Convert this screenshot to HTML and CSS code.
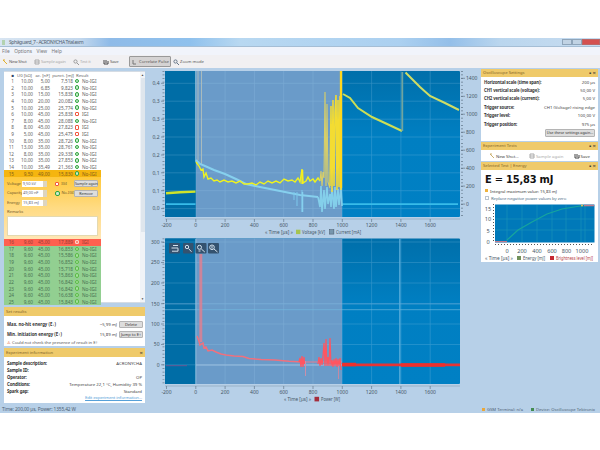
FILE: index.html
```html
<!DOCTYPE html>
<html lang="en">
<head>
    <meta charset="UTF-8">
    <title>Spark energy measurement</title>
    <link rel="stylesheet" href="styles.css">
</head>
<body>
    <div class="window">
        <div class="titlebar">
            <span class="app-icon"></span>
            <span class="title">Sphäguard_7 - ACRONYCHA Trial.exm</span>
            <span class="win-buttons"><i></i><i></i><i class="close"></i></span>
        </div>
        <div class="menu"><span>File</span><span>Options</span><span>View</span><span>Help</span></div>
        <div class="toolbar">
            <span class="tool t1"><svg class="icon" viewBox="0 0 6 6"><path d="M1 1l4 4M1 1h2" stroke="#e0b030"/></svg>New Shot</span>
            <span class="tool t2 off"><svg class="icon" viewBox="0 0 6 6"><path d="M1 1h4v4H1zM1 3h4" stroke="#aaa"/></svg>Sample again</span>
            <span class="tool t3 off"><svg class="icon" viewBox="0 0 6 6"><circle cx="2.5" cy="2.5" r="1.6" stroke="#999"/><path d="M4 4l2 2" stroke="#999"/></svg>Test it</span>
            <span class="tool t4"><svg class="icon" viewBox="0 0 6 6"><path d="M1 1v4h4V2M3 1v3" stroke="#444"/></svg>Save</span>
            <span class="tool t5 pressed"><svg class="icon" viewBox="0 0 6 6"><path d="M1 1v4h3" stroke="#777"/></svg>Correlate Pulse</span>
            <span class="tool t6"><svg class="icon" viewBox="0 0 6 6"><circle cx="2.5" cy="2.5" r="1.6" stroke="#678"/><path d="M4 4l2 2" stroke="#678"/></svg>Zoom mode</span>
        </div>

        <div class="main">
            <div class="left">
                <div class="list">
                    <div class="rows">
                        <div class="row head"><span>■</span><span>U0 [kΩ]</span><span>ac. [nF]</span><span>punct. [mJ]</span><span>Result</span></div>
                        <div id="rows-top"></div>
                        <div class="form">
                            <div class="field"><label>Voltage</label><span class="spin">9,50 kV</span><i class="mark red"></i><span class="word">IGI</span><button>Sample again</button></div>
                            <div class="field"><label>Capacity</label><span class="spin">49,00 nF</span><i class="mark"></i><span class="word">No-IGI</span><button>Remove</button></div>
                            <div class="field"><label>Energy</label><span class="spin">15,83 mJ</span></div>
                            <div class="remarks">Remarks</div>
                            <div class="textarea"></div>
                        </div>
                        <div id="rows-bottom"></div>
                    </div>
                    <div class="scroll"><span>▲</span><i></i><span>▼</span></div>
                </div>

                <div class="panel results">
                    <div class="panel-head">Set results</div>
                    <div class="panel-body">
                        <div class="line"><b>Max. no-hit energy (E↓)</b><span>~5,99 mJ</span><button>Delete</button></div>
                        <div class="line"><b>Min. initiation energy (E↑)</b><span>15,89 mJ</span><button>Jump to E↑</button></div>
                        <div class="warn"><i>⚠</i> Could not check the presence of result in E↑</div>
                    </div>
                </div>

                <div class="panel info">
                    <div class="panel-head">Experiment information <em>×</em></div>
                    <div class="panel-body">
                        <div class="line"><b>Sample description:</b><span>ACRONYCHA</span></div>
                        <div class="line"><b>Sample ID:</b><span></span></div>
                        <div class="line"><b>Operator:</b><span>OP</span></div>
                        <div class="line"><b>Conditions:</b><span>Temperature 22,1 °C, Humidity 39 %</span></div>
                        <div class="line"><b>Spark gap:</b><span>Standard</span></div>
                        <a class="link">Edit experiment information...</a>
                    </div>
                </div>
            </div>

            <div class="charts">
                <svg class="chart" id="chart-vi" width="334" height="168" viewBox="146 68 334 168">
                    <defs>
                        <linearGradient id="sea" x1="0" y1="0" x2="0" y2="1">
                            <stop offset="0" stop-color="#006faa"/><stop offset=".45" stop-color="#007fc2"/><stop offset="1" stop-color="#0080c4"/>
                        </linearGradient>
                    </defs>
                    <rect x="165" y="71" width="295" height="146" rx="1" fill="url(#sea)"/>
                    <rect x="165" y="71" width="31" height="146" fill="#006da6"/>
                    <rect x="196" y="71" width="146" height="146" fill="#6a9bc9"/>
                    <g class="grid"></g>
                    <path d="M195.7 71V162" stroke="#aacce0" stroke-width=".8"/>
                    <path d="M198 71V160M201.5 71V165" stroke="#a9bbbd" stroke-width="1"/>
                    <path d="M166 204.2H195.5M342 204.2H458" stroke="#38bce9" stroke-width="1.8" fill="none"/>
                    <path d="M196 160L200 164L205 166L214 170L225 174L236 179L246 184L260 187L280 191L300 195L318 197" stroke="#86d0ee" stroke-width="2" fill="none"/>
                    <path d="M294 192v8M297 192v14M302 190v22" stroke="#7cc8ec" stroke-width="1"/>
                    <path d="M302.500 192V212" stroke="#86d0ee" stroke-width="1.500"/>
                    <path d="M318 197L320 207L321 186L322 212L324 190L325 209L327 187L328 204L330 194L331 207L332 188L334 209L335 187L336 207L338 189L339 205L341 188L342 206" stroke="#84cfea" stroke-width="1.6" fill="none"/>
                    <path d="M166 193.2L180 192.3L195.5 191.6" stroke="#cfe32a" stroke-width="2.4" fill="none"/>
                    <path d="M196 162L199 166L201 170L203 169L204 177L206 173L208 179L211 178L214 181L217 180L220 182L224 180L228 182L232 181L236 183L240 181L244 184L248 184L252 183L256 185L260 182L264 184L268 181L272 183L276 181L280 183L284 179L288 181L292 180L295 182L298 178L300 182L302 169L303 183L306 181L308 177L310 181L313 179L315 182L318 178L320 181" stroke="#eef21f" stroke-width="1.4" fill="none"/>
                    <path d="M302.300 170V184" stroke="#f6ee20" stroke-width="2"/>
                    <path d="M320 181L321 171L322 186L323 172L324 178L325 92L326 186L327 104L328 182L330 188" stroke="#d7ce69" stroke-width="1.1" fill="none"/>
                    <path d="M330 186L331 106L332 192L333 100L334 186L335 112L336 95L337 190L338 100L339 187L340 96L341 190" stroke="#f3dc32" stroke-width="1.5" fill="none"/>
                    <path d="M341 71V188" stroke="#ffd71d" stroke-width="2.3"/>
                    <path d="M343 94L350 98L358 108L372 117L386 123.5L402 131" stroke="#cdde55" stroke-width="2" fill="none"/>
                    <path d="M402.3 131V72" stroke="#70a5a0" stroke-width="1.8"/>
                    <path d="M405.5 72.5L412 79L420 87L430 96L445 103L459 110" stroke="#cfdd65" stroke-width="2" fill="none"/>
                    <g class="axes"></g>
                    <g class="legend"><text x="265" y="234.2" textLength="28" lengthAdjust="spacingAndGlyphs">« Time [µs] »</text><rect x="296" y="229.7" width="4.4" height="4.4" fill="#a6c44f"/><text x="302" y="234.2" textLength="23" lengthAdjust="spacingAndGlyphs">Voltage [kV]</text><rect x="329.5" y="229.7" width="4.4" height="4.4" fill="#7796ad" stroke="#456" stroke-width=".5"/><text x="336" y="234.2" textLength="25" lengthAdjust="spacingAndGlyphs">Current [mA]</text></g>
                </svg>
                <svg class="chart" id="chart-power" width="334" height="170" viewBox="146 236 334 170">
                    <rect x="165" y="238.5" width="295" height="145.5" rx="1" fill="url(#sea)"/>
                    <rect x="165" y="238.5" width="31" height="145.5" fill="#006da6"/>
                    <rect x="196" y="238.5" width="146" height="145.5" fill="#6a9bc9"/>
                    <g class="grid"></g>
                    <path d="M165 309.7H460" stroke="#74bbdf" stroke-width=".8" opacity=".8"/>
                    <path d="M165 303.9H460" stroke="#78b2dc" stroke-width=".8" opacity=".6"/>
                    <path d="M196 365H342" stroke="#a5c5e3" stroke-width=".8"/>
                    <path d="M399.8 239V384" stroke="#5dafdc" stroke-width="1.2"/>
                    <path d="M195.8 239V384" stroke="#9cc6e3" stroke-width=".8"/>
                    <path d="M200.8 254V342" stroke="#df8192" stroke-width="3" opacity=".85"/>
                    <path d="M197 336L199 341L200 345L203 343L204 348L206 347L208 351L212 350L216 352L221 354L226 355L234 356L243 356.500L249 358.500L261 359.500L275 360L289 361.300L302 362" stroke="#f0707d" stroke-width="1.5" fill="none"/>
                    <path d="M301 362H342" stroke="#e47c90" stroke-width="1"/>
                    <path d="M299 362L300 358L301 367L302 356L303 367L304 357L304.500 364" stroke="#ff5561" stroke-width="1.3" fill="none"/>
                    <path d="M305.5 361v15" stroke="#c98faa"/>
                    <path d="M318 364L319 357L320 366L321 358L322 365L323 356L324 343L325 366L326 339L327 366L328 357L329 366L330 338L331 366L332 360L333 367L334 359L335 366L336 358L337 367L338 359L339 366L340 358L341 370" stroke="#ff5560" stroke-width="1.2" fill="none"/>
                    <path d="M338.500 366V379" stroke="#d9849b" stroke-width=".8"/>
                    <path d="M166 365.7H187" stroke="#81508e" stroke-width=".8"/>
                    <path d="M342 364.9H460" stroke="#e53435" stroke-width="2.6"/>
                    <path d="M342 364.5H356M401 365H445" stroke="#ef2f2c" stroke-width="3.6"/>
                    <g class="axes"></g>
                    <g class="zoom-tools" fill="none" stroke="#d5e2ee" stroke-width="1">
                        <g fill="#34526f" stroke="none"><rect x="169" y="243" width="11" height="10.5" rx="1"/><rect x="183" y="243" width="10.5" height="10.5" rx="1"/><rect x="195.5" y="243" width="11" height="10.5" rx="1"/><rect x="208" y="243" width="11" height="10.5" rx="1"/></g>
                        <path d="M173 245.5h5M171.500 248h6.500M172 251.200h6v-3"/>
                        <circle cx="187" cy="247" r="1.7"/><path d="M188.5 248.5l3 3.3"/>
                        <circle cx="199.5" cy="247.3" r="2"/><path d="M201.3 249l3.5 3M198.5 251h2"/>
                        <circle cx="212" cy="247.3" r="2.3"/><path d="M214 249l3.5 3M212 246v2.6"/>
                    </g>
                    <g class="legend"><text x="284" y="401" textLength="27" lengthAdjust="spacingAndGlyphs">« Time [µs] »</text><rect x="314.5" y="396.8" width="4.6" height="4.6" fill="#a42d3c"/><text x="321" y="401" textLength="19" lengthAdjust="spacingAndGlyphs">Power [W]</text></g>
                </svg>
            </div>

            <div class="right">
                <div class="panel settings">
                    <div class="panel-head">Oscilloscope Settings <em>▪ ×</em></div>
                    <div class="panel-body">
                        <div class="line"><b>Horizontal scale (time span):</b><span>200 µs</span></div>
                        <div class="line"><b>CH1 vertical scale (voltage):</b><span>50,00 V</span></div>
                        <div class="line"><b>CH2 vertical scale (current):</b><span>5,00 V</span></div>
                        <div class="line"><b>Trigger source:</b><span>CH1 (Voltage) rising edge</span></div>
                        <div class="line"><b>Trigger level:</b><span>100,00 V</span></div>
                        <div class="line"><b>Trigger position:</b><span>975 µs</span></div>
                        <button>Use these settings again...</button>
                    </div>
                </div>
                <div class="panel tests">
                    <div class="panel-head">Experiment Tests <em>▪ ×</em></div>
                    <div class="panel-body">
                        <span><svg class="icon" viewBox="0 0 6 6"><path d="M1 1l4 4M1 1h2" stroke="#cbb070"/></svg>New Shot...</span>
                        <span class="off"><svg class="icon" viewBox="0 0 6 6"><path d="M1 1h4v4H1zM1 3h4" stroke="#aaa"/></svg>Sample again</span>
                        <span><svg class="icon" viewBox="0 0 6 6"><path d="M1 1v4h4V2M3 1v3" stroke="#444"/></svg>Save</span>
                    </div>
                </div>
                <div class="panel energy">
                    <div class="panel-head">Selected Test | Energy <em>▪ ×</em></div>
                    <div class="panel-body">
                        <div class="value">E <span>=</span> 15,83 mJ</div>
                        <div class="note"><i class="bullet"></i>Integral maximum value: 15,83 mJ</div>
                        <div class="note blue"><i class="box"></i>Replace negative power values by zero</div>
                        <svg class="mini" width="116" height="60" viewBox="481 202 116 60">
                            <rect x="495" y="204.5" width="99.5" height="38" fill="#0079b9"/>
                            <path d="M507 205v37M522 205v37M537 205v37M552 205v37M566 205v37M581 205v37M585 205v37M495 219h99M495 230h99" stroke="#1994b9" stroke-width=".7"/>
                            <path d="M507 240L518 230L532 222L547 214L562 209L580 206L594 205.5" stroke="#16a59d" stroke-width="1.2" fill="none"/>
                            <path d="M495 241.7H507M584 205.5H594" stroke="#c0798c" stroke-width="1.3"/>
                            <circle cx="582" cy="205.5" r="1" fill="#f0c050"/>
                            <path d="M493.5 204v39M495 244.5h99" stroke="#555" stroke-width="1" stroke-dasharray="1 2"/>
                            <g class="mini-labels"><text x="488" y="210.5">15</text><text x="488" y="221">10</text><text x="488" y="232.5">5</text><text x="488" y="243.5">0</text>
                            <text x="507" y="252.5">0</text><text x="522" y="252.5">200</text><text x="537" y="252.5">400</text><text x="552" y="252.5">600</text><text x="566.5" y="252.5">800</text><text x="582" y="252.5">1000</text></g>
                            <g class="legend"><text x="485" y="260" textLength="28" lengthAdjust="spacingAndGlyphs">« Time [µs] »</text><rect x="517" y="256" width="4" height="4" fill="#71915a"/><text x="523" y="260" textLength="22" lengthAdjust="spacingAndGlyphs">Energy [mJ]</text><rect x="550" y="256" width="4" height="4" fill="#c62a32"/><text class="red-text" x="556" y="260" textLength="37" lengthAdjust="spacingAndGlyphs">Brightness level [mJ]</text></g>
                        </svg>
                    </div>
                </div>
            </div>
        </div>
        <div class="status"><span>Time: 200,00 µs, Power: 1355,42 W</span><span class="devices"><i class="amber"></i>GSM Terminal: n/a<i class="green"></i>Device: Oscilloscope Tektronix</span></div>
    </div>

    <script>
        // number, set voltage, capacity, energy, ignition
        const shots = [
            [1, '10,00', '5,00', '7,518', 0], [2, '10,00', '6,85', '9,823', 0],
            [3, '10,00', '15,00', '15,838', 0], [4, '10,00', '20,00', '20,082', 0],
            [5, '10,00', '25,00', '25,774', 0], [6, '10,00', '45,00', '25,838', 1],
            [7, '8,00', '45,00', '28,088', 0], [8, '8,00', '45,00', '27,823', 1],
            [9, '5,00', '45,00', '25,475', 1], [10, '8,00', '35,00', '28,726', 0],
            [11, '13,00', '35,00', '28,761', 0], [12, '8,00', '35,00', '29,338', 0],
            [13, '10,00', '35,00', '27,853', 0], [14, '10,00', '35,49', '21,363', 0],
            [15, '9,50', '49,00', '15,830', 0], [16, '9,60', '45,00', '17,889', 1],
            [17, '9,60', '45,00', '16,853', 0], [18, '9,60', '45,00', '15,586', 0],
            [19, '9,60', '45,00', '16,852', 0], [20, '9,60', '45,00', '15,718', 0],
            [21, '9,60', '45,00', '15,863', 0], [22, '9,60', '45,00', '16,842', 0],
            [23, '9,60', '45,00', '16,842', 0], [24, '9,60', '45,00', '16,638', 0],
            [25, '9,60', '45,00', '15,843', 0]
        ];
        shots.forEach(function (s) {
            const row = document.createElement('div');
            row.className = 'row' + (s[0] === 15 ? ' selected' : s[0] === 16 ? ' fail' : s[0] > 16 ? ' pass' : '');
            row.innerHTML = '<span>' + s.slice(0, 4).join('</span><span>') + '</span><i class="mark' + (s[4] ? ' red' : '') + '"></i><span>' + (s[4] ? 'IGI' : 'No-IGI') + '</span>';
            document.getElementById(s[0] < 16 ? 'rows-top' : 'rows-bottom').appendChild(row);
        });

        function label(x, y, text, anchor) {
            return '<text x="' + x + '" y="' + (y + 1.8) + '" text-anchor="' + anchor + '">' + text + '</text>';
        }

        function drawAxes(id, top, bottom, left, right) {
            const chart = document.getElementById(id);
            let grid = '', axes = '';
            for (let i = 0; i < 10; i++) {
                const x = 166.5 + i * 29.3;
                if (i > 0) grid += '<path d="M' + x + ' ' + top + 'V' + bottom + '"/>';
                axes += '<path d="M' + x + ' ' + (bottom + 2) + 'v3"/>' + label(x, bottom + 8, -200 + i * 200, 'middle');
            }
            left.forEach(function (t) {
                grid += '<path d="M165 ' + t[0] + 'H460"/>';
                axes += '<path d="M161 ' + t[0] + 'h3"/>' + label(159.5, t[0], t[1], 'end');
            });
            right.forEach(function (t) {
                axes += '<path d="M461 ' + t[0] + 'h4"/>' + label(466, t[0], t[1], 'start');
            });
            axes += '<path class="ticks" d="M163.5 ' + top + 'V' + bottom + '"/>';
            if (right.length) axes += '<path class="ticks" d="M462 ' + top + 'V' + bottom + '"/>';
            axes += '<path d="M165 ' + (bottom + 2) + 'H460" opacity=".5"/>';
            chart.querySelector('.grid').innerHTML = grid;
            chart.querySelector('.axes').innerHTML = axes;
        }

        drawAxes('chart-vi', 71, 217,
            [[83.3, '0,4'], [101.2, '0,3'], [119.2, '0,3'], [137, '0,2'], [155, '0,2'], [172.8, '0,1'], [190.7, '0,1'], [208.6, '0,0']],
            [[78.3, 1400], [96.3, 1200], [114.2, 1000], [132.2, 800], [150.2, 600], [168.2, 400], [186.1, 200], [204.1, 0]]);
        drawAxes('chart-power', 238.5, 384,
            [[242, 300], [262.5, 250], [283, 200], [303.7, 150], [324, 100], [344.5, 50], [364.8, 0]], []);
    </script>
</body>
</html>
```

FILE: styles.css
```css
* {
    box-sizing: border-box;
}

body {
    margin: 0;
    padding-top: 38px;
    height: 450px;
    background: #fff;
    overflow: hidden;
    font-family: "Noto Sans", Verdana, sans-serif;
    font-size: 4.3px;
    line-height: 6px;
    color: #444;
}

i, em {
    font-style: normal;
}

.window {
    width: 600px;
    height: 375px;
    background: #b7d0e8;
    display: flex;
    flex-direction: column;
}

.titlebar {
    height: 9px;
    display: flex;
    align-items: center;
    padding-left: 2px;
    background: linear-gradient(90deg, #d8e5f2 0, #c3d8ed 80px, #8fbbe8 110px, #8fc1ed 190px, #b8d8f1 240px, #abd0f0 400px, #94bfe9 450px, #bad6ee 500px, #c7dcf0 600px);
    border-bottom: 1px solid #a5bed5;
}

.app-icon {
    width: 3px;
    height: 5px;
    background: #b3d2b0;
    margin-right: 4px;
}

.title {
    font-size: 5px;
    letter-spacing: -.4px;
    color: #52616f;
}

.win-buttons {
    margin-left: auto;
    align-self: flex-start;
    display: flex;
    padding-top: 1px;
}

.win-buttons i {
    width: 10px;
    height: 6px;
    border: 1px solid #8fa5ba;
    background: #c1d3e4;
}

.win-buttons .close {
    width: 18px;
    background: #d45150;
    border-color: #b66;
}

.menu {
    height: 8px;
    display: flex;
    gap: 4.5px;
    padding: 1px 2px;
    background: #f1f4fb;
    font-size: 4.8px;
    color: #777;
}

.toolbar {
    height: 13px;
    display: flex;
    align-items: center;
    padding-left: 2px;
    background: #f1f0f2;
    color: #555;
    font-size: 4.2px;
    letter-spacing: -.15px;
}

.tool {
    display: flex;
    align-items: center;
    gap: 1px;
    white-space: nowrap;
}

.t1 { width: 32px; }
.t2 { width: 39px; }
.t3 { width: 30px; }
.t4 { width: 26px; }
.t5 { width: 42px; margin-right: 2px; }

.off {
    color: #aaa;
}

.pressed {
    height: 11px;
    padding-left: 2px;
    border: 1px solid #999;
    border-radius: 1px;
    background: #d5d3d3;
    letter-spacing: 0;
}

.t6 {
    letter-spacing: 0;
}

.icon {
    width: 6px;
    height: 6px;
    fill: none;
    stroke-width: 1;
    flex: none;
}

.main {
    display: flex;
    height: 338px;
}

.left {
    width: 146px;
    padding: 3px 1px 0 4px;
}

.list {
    display: flex;
    height: 232px;
    background: #fff;
    border: 0 solid #d5dce4;
    border-width: 1px 0;
}

.rows {
    width: 97px;
    font-size: 4.7px;
    color: #5f5f5f;
}

.row {
    display: grid;
    grid-template-columns: 10px 19px 17px 23px 8px 20px;
    align-items: center;
    height: 6.61px;
    text-align: right;
    white-space: nowrap;
}

.row > span:last-child {
    text-align: left;
    padding-left: 1px;
}

.head {
    grid-template-columns: 10px 18px 18px 24px 24px;
    height: 5.8px;
    font-size: 4.3px;
}

.head span:first-child {
    color: #346;
}

.head > span:last-child {
    padding-left: 2px;
}

.mark {
    width: 4.5px;
    height: 4.5px;
    border: 1px solid #2ea63e;
    border-radius: 2px;
    background: #cdebcf;
    justify-self: center;
    flex: none;
}

.mark.red {
    border-color: #f0553e;
    border-radius: 1px;
    background: #fff;
}

.selected {
    background: #f5b50f;
    color: #866018;
}

.fail {
    background: #ff604f;
    color: #953b34;
}

.fail .mark.red {
    border-color: #ffd3c9;
    background: #ff8b79;
}

.pass {
    background: #92cf91;
    color: #487151;
}

.pass .mark {
    border-color: #59bc43;
    background: #a7dfa0;
}

.form {
    height: 62px;
    padding: 2px 3px;
    background: linear-gradient(#ffc93c, #ffdb83 50%, #ffe6b5);
    font-size: 4.1px;
    letter-spacing: -.1px;
    color: #765b2d;
}

.field {
    height: 9.7px;
    display: flex;
    align-items: center;
}

.field label {
    width: 15px;
}

.spin {
    width: 25px;
    height: 6.5px;
    padding-left: 1px;
    border-right: 4px solid #ddd5c0;
    background: #fff;
    color: #667;
    white-space: nowrap;
    flex: none;
}

.field .mark {
    margin-left: 8px;
}

.word {
    width: 15px;
    padding-left: 2px;
    white-space: nowrap;
}

button {
    height: 7px;
    padding: 0;
    border: 1px solid #b4b4b4;
    border-radius: 1px;
    background: #ddd;
    font: 4px/5px "Noto Sans", sans-serif;
    color: #333;
    white-space: nowrap;
}

.field button {
    width: 24px;
    font-size: 3.6px;
    flex: none;
}

.remarks {
    height: 8px;
    padding-top: 1px;
}

.textarea {
    height: 20px;
    border: 1px solid #e4d9b0;
    background: #fff;
}

.scroll {
    width: 5px;
    margin-left: auto;
    display: flex;
    flex-direction: column;
    align-items: center;
    background: #f0f3f7;
    font-size: 3px;
}

.scroll i {
    width: 4px;
    height: 154px;
    background: #dfe6ed;
}

.scroll span:last-child {
    margin-top: auto;
}

.panel-head {
    height: 8px;
    display: flex;
    align-items: center;
    justify-content: space-between;
    padding: 0 2px;
    background: #efca6a;
    color: #806226;
    font-size: 4.2px;
}

.panel-head em {
    color: #333;
    font-size: 6px;
}

.panel-body {
    background: #fff;
}

.line {
    display: flex;
    align-items: center;
    white-space: nowrap;
}

.line b {
    color: #333;
    letter-spacing: -.12px;
}

.line span {
    margin-left: auto;
}

.results {
    margin-top: 4px;
}

.results .panel-head,
.info .panel-head {
    height: 9px;
}

.results .panel-body {
    height: 30px;
    padding: 3px 2px 0 3px;
}

.results .line {
    height: 10px;
}

.results .line b {
    letter-spacing: 0;
}

.results button {
    width: 24px;
    margin-left: 2px;
}

.warn {
    color: #555;
    letter-spacing: -.05px;
}

.warn i {
    color: #e0552c;
}

.info {
    margin-top: 2px;
}

.info .panel-body {
    height: 46px;
    padding: 2px 3px 0;
}

.info .line {
    height: 7px;
}

.link {
    display: block;
    text-align: right;
    letter-spacing: -.12px;
    color: #56a0d8;
    text-decoration: underline;
}

.charts {
    width: 334px;
}

.chart, .mini {
    display: block;
}

.grid {
    stroke: #9fd0ee;
    stroke-width: .7;
    opacity: .3;
}

.axes {
    stroke: #65798c;
    stroke-width: .7;
    fill: none;
}

.axes text, .mini-labels, .legend {
    font-family: "Noto Sans", sans-serif;
    font-size: 5px;
    fill: #465666;
    stroke: none;
}

.axes .ticks {
    stroke-width: 2;
    stroke-dasharray: .7 2.9;
}

.legend {
    font-size: 4.4px;
}

.mini-labels {
    text-anchor: middle;
    font-size: 5.6px;
}

.red-text {
    fill: #b63a42;
}

.right {
    width: 117px;
    margin-left: 1px;
    padding-top: 1px;
}

.settings .panel-body {
    height: 64px;
    padding: 1px 3px 0;
    text-align: right;
}

.settings .panel-head {
    height: 7.5px;
}

.settings .line {
    height: 8.4px;
}

.settings button {
    height: 8px;
    width: 50px;
    margin-top: 1px;
    display: block;
    margin-left: auto;
    font-size: 3.8px;
}

.tests {
    margin-top: 1.5px;
}

.tests .panel-body {
    height: 11px;
    display: flex;
    align-items: center;
    justify-content: space-between;
    padding: 0 8px;
}

.tests .panel-body span {
    display: flex;
    gap: 1px;
}

.energy {
    margin-top: 1px;
}

.energy .panel-body {
    height: 92px;
}

.value {
    height: 17px;
    padding-left: 4px;
    font: bold 9.9px/19px "DejaVu Sans", sans-serif;
    letter-spacing: -.2px;
    color: #111;
    white-space: nowrap;
}

.value span {
    font-weight: normal;
}

.note {
    display: flex;
    align-items: center;
    gap: 2px;
    height: 7.5px;
    padding-left: 4px;
    letter-spacing: -.07px;
}

.blue {
    color: #527089;
}

.bullet {
    width: 3px;
    height: 3px;
    background: #efb33e;
}

.box {
    width: 4px;
    height: 4px;
    border: 1px solid #bbc5cf;
}

.status {
    height: 7px;
    display: flex;
    justify-content: space-between;
    padding: 0 5px 0 2px;
    font-size: 4.8px;
    letter-spacing: -.12px;
    color: #4d6073;
}

.devices {
    display: flex;
    align-items: center;
    gap: 2px;
    font-size: 4.2px;
    letter-spacing: 0;
}

.devices i {
    width: 3px;
    height: 3px;
    background: #e9a73b;
}

.devices .green {
    margin-left: 6px;
    background: #438c51;
}
```
